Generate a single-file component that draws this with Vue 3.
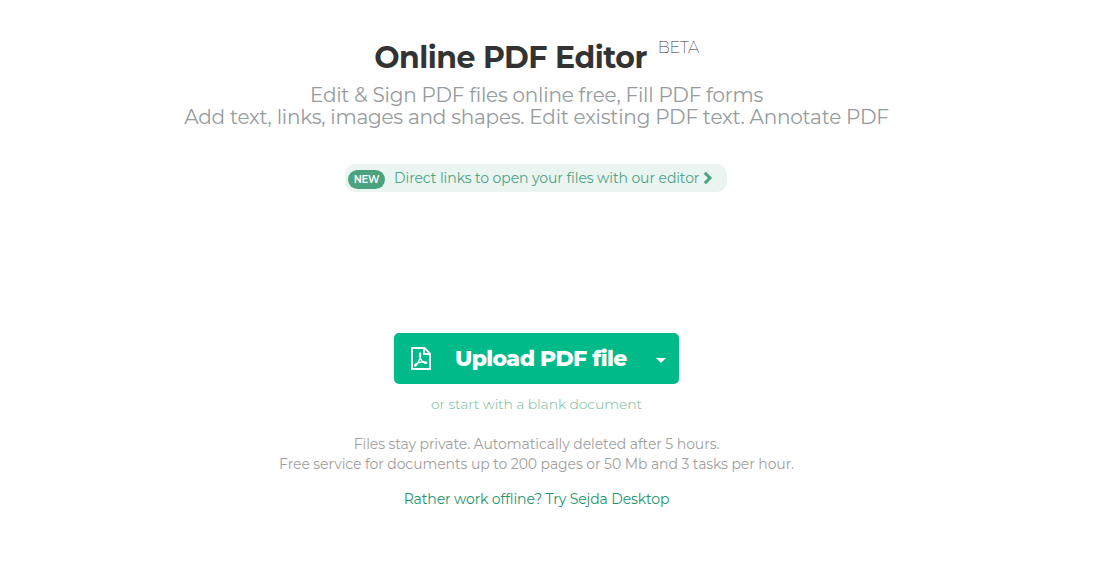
<template>
  <main class="editor-page">
    <h1>
      <span class="title">Online PDF Editor</span>
      <sup>BETA</sup>
    </h1>

    <h2>
      <span class="line first">Edit &amp; Sign PDF files online free, Fill PDF forms</span>
      <span class="line second">Add text, links, images and shapes. Edit existing PDF text. Annotate PDF</span>
    </h2>

    <a class="announcement" href="#">
      <span class="badge">NEW</span>
      <span class="announcement-text">Direct links to open your files with our editor</span>
      <svg class="chevron" viewBox="0 0 10 14" aria-hidden="true">
        <path d="M1.8 1.8 7 7l-5.200 5.200" />
      </svg>
    </a>

    <div class="upload">
      <button class="btn upload-btn" type="button" @click="openPicker">
        <svg class="pdf-icon" viewBox="0 0 20 23" aria-hidden="true">
          <path d="M1 1h12.500L19 6.500V22H1zM13 1v6h6" />
          <path
            class="thin"
            d="M9.300 6c-1-.2-1.100 1.500-.4 4 1 3.300 3 5.500 5.500 6.300 1.200.3 1.800-.4 1-.9-1.700-.9-6.400-.3-9.400.9-2 .9-2.900 2.200-2.200 2.700 1 .6 3.400-3.300 4.700-6.800 1-2.800 1.800-5.900.8-6.200z"
          />
        </svg>
        <span class="upload-text">Upload PDF file</span>
      </button>
      <button class="btn toggle" type="button" aria-label="More" @click="menuOpen = !menuOpen">
        <span class="caret"></span>
      </button>
      <input ref="fileInput" type="file" accept="application/pdf" hidden />
    </div>

    <a class="blank" href="#">or start with a blank document</a>

    <div class="notes">
      <span class="files">Files stay private. Automatically deleted after 5 hours.</span>
      <span class="free">Free service for documents up to 200 pages or 50 Mb and 3 tasks per hour.</span>
    </div>

    <a class="offline" href="#">Rather work offline? Try Sejda Desktop</a>
  </main>
</template>

<script setup>
import { ref } from "vue"

const fileInput = ref(null)
const menuOpen = ref(false)

const openPicker = () => {
  fileInput.value.click()
}
</script>

<style>
body {
  margin: 0;
  background: #fff;
}
</style>

<style scoped>
.editor-page {
  box-sizing: border-box;
  width: 1073px;
  height: 575px;
  padding-top: 38px;
  display: flex;
  flex-direction: column;
  align-items: center;
  overflow: hidden;
  white-space: nowrap;
  font-family: Montserrat, Inter, sans-serif;
}

h1 {
  display: flex;
  align-items: flex-start;
  gap: 11px;
  height: 46px;
  margin: 0;
  color: #333;
  font-size: 30px;
  line-height: 40px;
  font-weight: 700;
  letter-spacing: -0.52px;
}

sup {
  font-size: 16px;
  line-height: 20px;
  font-weight: 200;
  letter-spacing: -0.3px;
}

h2 {
  display: flex;
  flex-direction: column;
  align-items: center;
  height: 80px;
  margin: 0;
  color: #969b9e;
  font-size: 20px;
  line-height: 22px;
  font-weight: 400;
  letter-spacing: -0.22px;
}

a {
  text-decoration: none;
}

.announcement {
  box-sizing: border-box;
  display: flex;
  align-items: center;
  width: 382px;
  height: 28px;
  margin-right: 1px;
  padding-left: 3px;
  border-radius: 10px;
  background: #eaf5f2;
  color: #4fa283;
  font-size: 14px;
  letter-spacing: -0.09px;
}

.badge {
  width: 37px;
  height: 19px;
  margin: 2px 9px 0 0;
  border-radius: 10px;
  background: #4aa27f;
  color: #fff;
  font-size: 10px;
  line-height: 19px;
  font-weight: 600;
  letter-spacing: -0.2px;
  text-align: center;
}

.chevron {
  width: 10px;
  height: 14px;
  margin-left: 4px;
  fill: none;
  stroke: #4aa27f;
  stroke-width: 3;
}

.upload {
  display: flex;
  width: 285px;
  height: 51px;
  margin-top: 141px;
  border-radius: 5px;
  background: #00bb89;
}

.btn {
  display: flex;
  align-items: center;
  padding: 0;
  border: none;
  background: none;
  color: #fff;
  font-family: inherit;
  cursor: pointer;
}

.upload-btn {
  width: 249px;
  padding-left: 17px;
  font-size: 22px;
  font-weight: 800;
  letter-spacing: -0.64px;
}

.pdf-icon {
  width: 20px;
  height: 23px;
  margin-right: 24px;
  fill: none;
  stroke: #fff;
  stroke-width: 1.8;
}

.pdf-icon .thin {
  stroke-width: 1.3;
}

.toggle {
  width: 36px;
  padding: 3px 0 0 13px;
}

.caret {
  border-top: 5px solid #fff;
  border-right: 5px solid transparent;
  border-left: 5px solid transparent;
}

.blank {
  height: 40px;
  margin-top: 10px;
  color: #72b895;
  font-size: 14px;
  line-height: 20px;
  font-weight: 300;
  letter-spacing: -0.12px;
}

.notes {
  display: flex;
  flex-direction: column;
  align-items: center;
  height: 55px;
  color: #a0a0a0;
  font-size: 14px;
  line-height: 20px;
  letter-spacing: -0.09px;
}

.offline {
  color: #22946e;
  font-size: 14px;
  line-height: 20px;
  letter-spacing: -0.12px;
}
</style>
